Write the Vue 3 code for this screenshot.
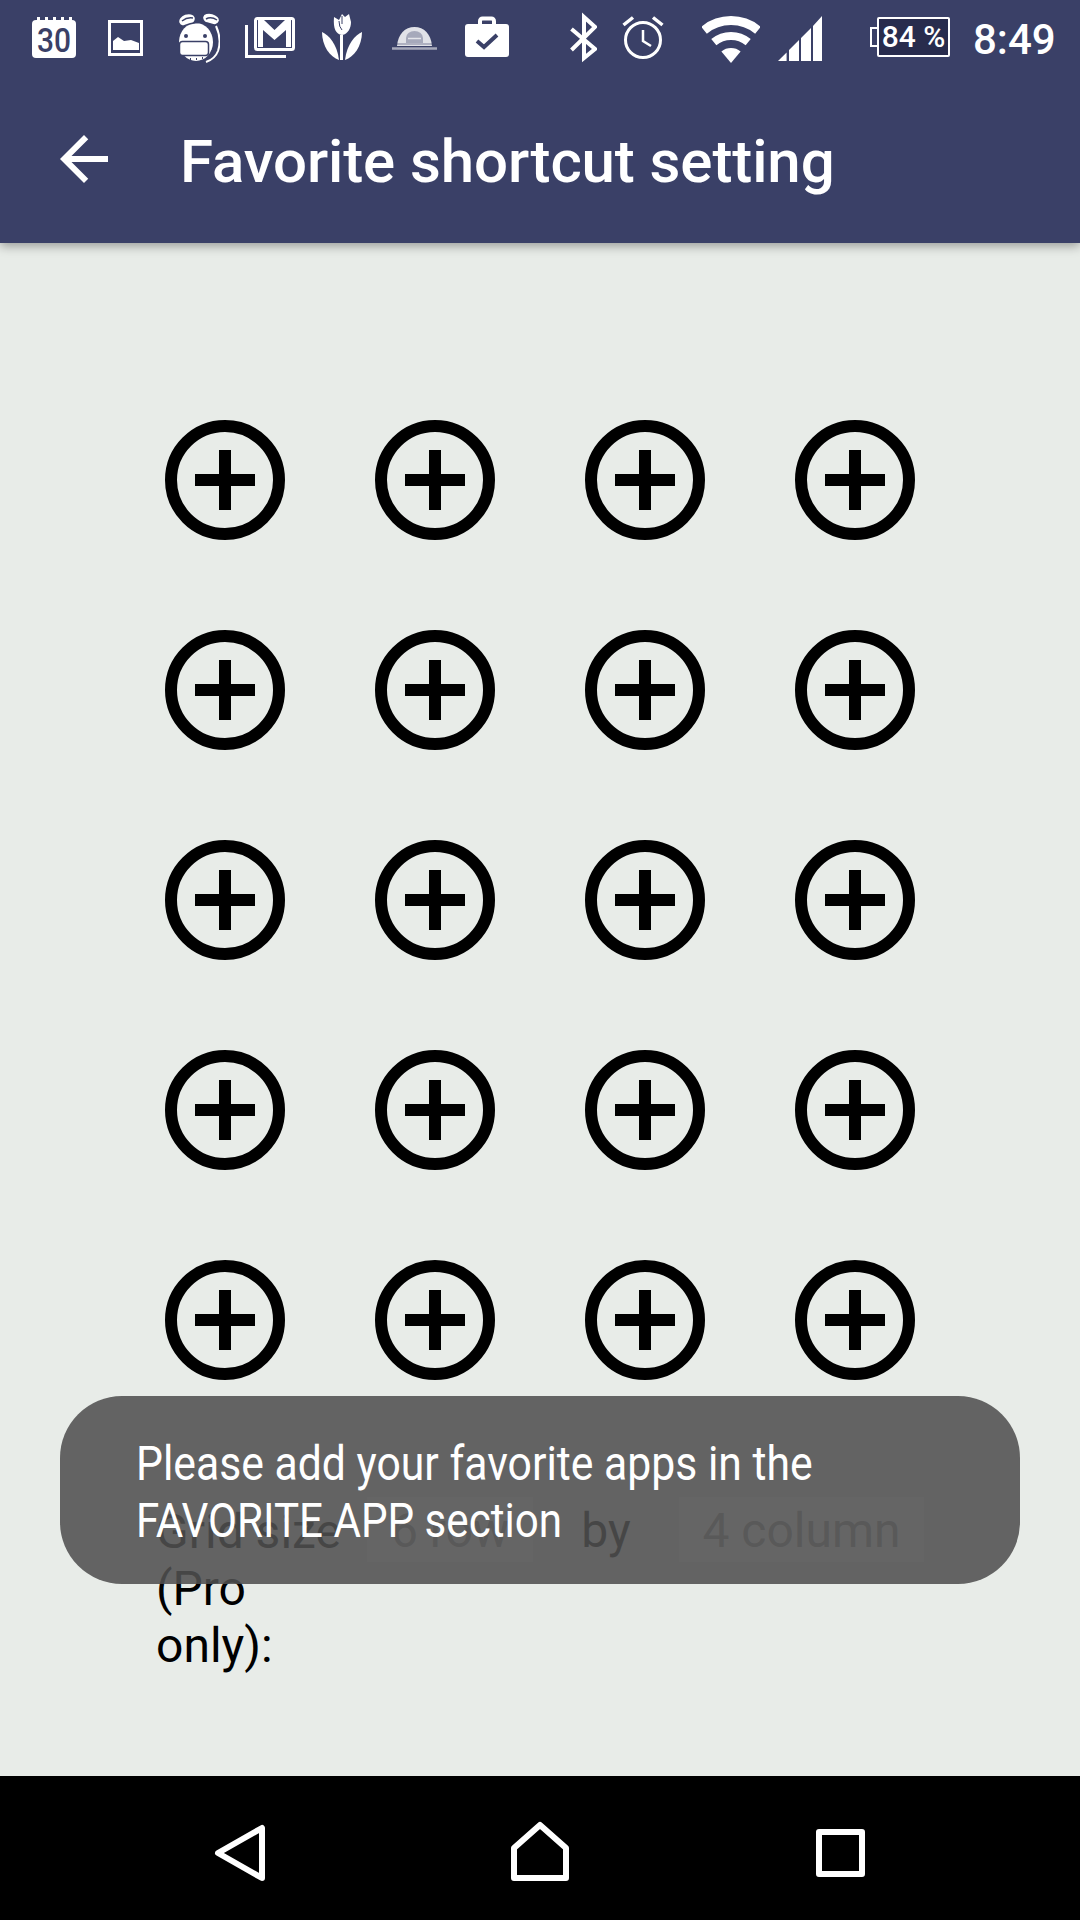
<script setup>
const rows = 5
const cols = 4
const slots = Array.from({ length: rows * cols }, (_, i) => i)
</script>

<template>
  <div class="screen">
    <header class="top">
      <div class="status">
        <svg class="ic-cal" viewBox="0 0 44 72">
          <path d="M4 20h36a4 4 0 0 1 4 4v30a4 4 0 0 1-4 4H4a4 4 0 0 1-4-4V24a4 4 0 0 1 4-4z" fill="#fff" />
          <path d="M5 17h3v4H5zM13 17h3v4h-3zM21 17h3v4h-3zM29 17h3v4h-3zM37 17h3v4h-3z" fill="#fff" />
          <text x="5" y="52" class="cal-num" textLength="34" lengthAdjust="spacingAndGlyphs">30</text>
        </svg>
        <svg class="ic-img" viewBox="0 0 35 72">
          <rect x="1.5" y="21.5" width="32" height="33" fill="none" stroke="#fff" stroke-width="3" />
          <path d="M5 50v-9l5-4 6 4 7-1 8 3v7z" fill="#fff" />
        </svg>
        <svg class="ic-hippo" viewBox="0 0 42 72">
          <ellipse cx="18" cy="42" rx="17" ry="19" fill="#fff" />
          <ellipse cx="9" cy="20" rx="8" ry="5.500" fill="#fff" transform="rotate(-20 9 20)" />
          <ellipse cx="33" cy="19" rx="8" ry="5" fill="#fff" transform="rotate(15 33 19)" />
          <path d="M4 21q5-4 11-3M28 19q5-3 11 1M2 28q17-9 34-3" fill="none" stroke="#3a4067" stroke-width="1.500" />
          <path d="M38 26q6 13 2 25-3 8-12 11" fill="none" stroke="#fff" stroke-width="2" />
          <circle cx="8" cy="36" r="2" fill="#3a4067" />
          <circle cx="27" cy="36" r="2" fill="#3a4067" />
          <rect x="1.5" y="41.5" width="29" height="14" rx="3" fill="#fff" stroke="#3a4067" stroke-width="1.5" />
          <path d="M12 59h1M18 59h1M24 58h1" stroke="#3a4067" stroke-width="2" />
        </svg>
        <svg class="ic-mail" viewBox="0 0 50 72">
          <path d="M1.5 25v31.5H41" fill="none" stroke="#fff" stroke-width="3" />
          <rect x="10.5" y="18.5" width="38" height="31" rx="2" fill="none" stroke="#fff" stroke-width="3" />
          <path d="M13 20h6l10.500 10L40 20h6v27h-5V30L29.500 40 18 30v17h-5z" fill="#fff" />
        </svg>
        <svg class="ic-tulip" viewBox="0 0 40 72">
          <path d="M12 17l5 3 3-6 3 3 4-3 2 8c0 6-3 12-9 13-6-1-9-6-8-18z" fill="#fff" />
          <path d="M20 16v8M17 21q0 6 3 9" fill="none" stroke="#3a4067" stroke-width="1" />
          <path d="M18 35h3v25h-3z" fill="#fff" />
          <path d="M0 32c7 3 15 12 17 28C8 57 0 46 0 32z" fill="#fff" />
          <path d="M40 32c-7 3-15 12-17 28 9-3 17-14 17-28z" fill="#fff" />
        </svg>
        <svg class="ic-droid" viewBox="0 0 45 72">
          <path d="M5 46C6 34 13 27 22.500 27S39 34 40 46z" fill="#fff" fill-opacity=".85" />
          <path d="M14 43v-5a8.500 7 0 0 1 17 0v5z" fill="#3a4067" fill-opacity=".35" />
          <path d="M16 38.500h13" stroke="#fff" stroke-opacity=".7" stroke-width="1.500" />
          <path d="M3 44h39" stroke="#3a4067" stroke-opacity=".4" stroke-width="1.500" />
          <path d="M0 48.500h45" stroke="#fff" stroke-opacity=".55" stroke-width="2.500" />
        </svg>
        <svg class="ic-case" viewBox="0 0 44 72">
          <path d="M3 24h38a3 3 0 0 1 3 3v27a3 3 0 0 1-3 3H3a3 3 0 0 1-3-3V27a3 3 0 0 1 3-3z" fill="#fff" />
          <path d="M15 25v-4a2.500 2.500 0 0 1 2.500-2.500h9A2.500 2.500 0 0 1 29 21v4" fill="none" stroke="#fff" stroke-width="4" />
          <path d="M12 41l7 6 13-12" fill="none" stroke="#3a4067" stroke-width="4" />
        </svg>
        <svg class="ic-bt" viewBox="0 0 27 72">
          <path d="M1.500 29L25 49 14 58V17l11 10L1.500 50" fill="none" stroke="#fff" stroke-width="4" />
        </svg>
        <svg class="ic-alarm" viewBox="0 0 42 72">
          <circle cx="21" cy="40" r="17.500" fill="none" stroke="#fff" stroke-width="3" />
          <path d="M21 30v11l8 5" fill="none" stroke="#fff" stroke-width="2.500" />
          <path d="M1.500 25L11 17.500M31 17.500l9.500 7.500" fill="none" stroke="#fff" stroke-width="3.500" />
        </svg>
        <svg class="ic-wifi" viewBox="0 0 58 72">
          <path d="M2 30.300a42.500 42.500 0 0 1 54 0" fill="none" stroke="#fff" stroke-width="9" />
          <path d="M11.800 42.200a27 27 0 0 1 34.400 0" fill="none" stroke="#fff" stroke-width="8" />
          <path d="M29 63L19.400 51.400a15 15 0 0 1 19.200 0z" fill="#fff" />
        </svg>
        <svg class="ic-signal" viewBox="0 0 44 72">
          <path d="M0 61l8.600-8.500V61zM11 50l10-10v21H11zM23 38l10-10v33H23zM35 26l9-10v45h-9z" fill="#fff" />
        </svg>
        <div class="battery"><span class="batt-nub"></span><span class="batt-body">84 %</span></div>
        <span class="clock">8:49</span>
      </div>
      <div class="appbar">
        <svg class="back" viewBox="0 0 24 24">
          <path d="M20 11H7.830l5.590-5.590L12 4l-8 8 8 8 1.410-1.410L7.830 13H20v-2z" fill="#fff" />
        </svg>
        <h1 class="title">Favorite shortcut setting</h1>
      </div>
    </header>

    <main class="content">
      <div class="grid">
        <div v-for="n in slots" :key="n" class="slot">
          <svg class="add" viewBox="0 0 120 120">
            <circle cx="60" cy="60" r="54" fill="none" stroke="#000" stroke-width="12" />
            <path d="M54 30h12v24h24v12H66v24H54V66H30V54h24z" />
          </svg>
        </div>
      </div>
      <div class="size-row">
        <div class="size-label">Grid size (Pro only):</div>
        <div class="spin spin-rows">6 row</div>
        <div class="by">by</div>
        <div class="spin spin-cols">4 column</div>
      </div>
    </main>

    <nav class="navbar">
      <svg viewBox="0 0 72 144"><path d="M58 52v50L14 77z" class="nav-ic" /></svg>
      <svg viewBox="0 0 72 144"><path d="M36 49l26 23v30H10V72z" class="nav-ic" /></svg>
      <svg viewBox="0 0 72 144"><path d="M15 56h43v42H15z" class="nav-ic" /></svg>
    </nav>

    <div class="toast">
      <div class="toast-line">Please add your favorite apps in the</div>
      <div class="toast-line tight">FAVORITE APP section</div>
    </div>
  </div>
</template>

<style scoped>
.screen {
  position: relative;
  width: 1080px;
  height: 1920px;
  display: flex;
  flex-direction: column;
  overflow: hidden;
  background: #e8ece8;
  font-family: Roboto, "Liberation Sans", sans-serif;
}
.top {
  background: #3a4067;
  height: 243px;
  flex: none;
  box-shadow: 0 3px 10px rgba(0, 0, 0, 0.35);
  position: relative;
  z-index: 1;
}
.status {
  height: 72px;
  padding-left: 32px;
  display: flex;
  align-items: flex-start;
}
.status svg { height: 72px; flex: none; display: block; }
.ic-cal { width: 44px; }
.ic-img { width: 35px; margin-left: 32px; }
.ic-hippo { width: 42px; margin-left: 35px; }
.ic-mail { width: 50px; margin-left: 25px; }
.ic-tulip { width: 40px; margin-left: 27px; }
.ic-droid { width: 45px; margin-left: 30px; }
.ic-case { width: 44px; margin-left: 28px; }
.ic-bt { width: 27px; margin-left: 61px; }
.ic-alarm { width: 42px; margin-left: 25px; }
.ic-wifi { width: 58px; margin-left: 38px; }
.ic-signal { width: 44px; margin-left: 18px; }
.cal-num {
  font-family: Roboto, sans-serif;
  font-size: 33px;
  font-weight: 500;
  fill: #3a4067;
}
.battery {
  margin-left: 48px;
  margin-top: 17px;
  width: 80px;
  height: 40px;
  position: relative;
  display: flex;
  justify-content: flex-end;
}
.batt-nub {
  position: absolute;
  left: 0;
  top: 10px;
  width: 9px;
  height: 20px;
  border: 2px solid #fff;
  box-sizing: border-box;
}
.batt-body {
  position: relative;
  width: 73px;
  height: 40px;
  box-sizing: border-box;
  border: 2px solid #fff;
  border-radius: 2px;
  background: #282c4d;
  color: #fff;
  font-size: 30px;
  font-weight: 500;
  line-height: 36px;
  text-align: center;
  white-space: nowrap;
}
.clock {
  margin-left: 23px;
  margin-top: 15px;
  color: #fff;
  font-size: 42px;
  font-weight: 500;
  line-height: 49px;
  white-space: nowrap;
}
.appbar {
  height: 171px;
  display: flex;
  align-items: flex-start;
}
.back {
  width: 72px;
  height: 72px;
  margin: 51px 0 0 48px;
  flex: none;
}
.title {
  margin: 55px 0 0 60px;
  color: #fff;
  font-size: 60px;
  font-weight: 500;
  line-height: 70px;
  letter-spacing: -0.1px;
  white-space: nowrap;
}
.content {
  flex: 1;
  padding: 132px 0 0 120px;
}
.grid {
  display: grid;
  grid-template-columns: repeat(4, 210px);
  grid-auto-rows: 210px;
}
.slot {
  display: flex;
  align-items: center;
  justify-content: center;
}
.add { width: 120px; height: 120px; display: block; }
.size-row {
  margin: 72px 0 0 36px;
  display: flex;
  align-items: flex-start;
  color: #000;
  font-size: 48px;
  line-height: 57px;
}
.size-label { width: 211px; padding-top: 6px; }
.spin {
  height: 65px;
  background: #fff;
  color: #999;
  padding-top: 5px;
  box-sizing: border-box;
  text-align: center;
  white-space: nowrap;
}
.spin-rows { width: 166px; }
.spin-cols { width: 245px; }
.by { width: 146px; padding-top: 5px; text-align: center; }
.navbar {
  flex: none;
  height: 144px;
  background: #000;
  display: flex;
  justify-content: center;
  gap: 228px;
}
.navbar svg { width: 72px; height: 144px; display: block; }
.nav-ic {
  fill: none;
  stroke: #fff;
  stroke-width: 6;
  stroke-linejoin: round;
}
.toast {
  position: absolute;
  left: 60px;
  top: 1396px;
  width: 960px;
  height: 188px;
  z-index: 2;
  box-sizing: border-box;
  padding: 39px 0 0 76px;
  border-radius: 62px;
  background: rgba(80, 80, 80, 0.88);
  color: #fff;
  font-size: 48px;
  line-height: 57px;
}
.toast-line {
  white-space: nowrap;
  transform: scaleX(0.89);
  transform-origin: left center;
}
.toast-line.tight { transform: scaleX(0.878); }
</style>

<style>
html, body { margin: 0; padding: 0; }
</style>
